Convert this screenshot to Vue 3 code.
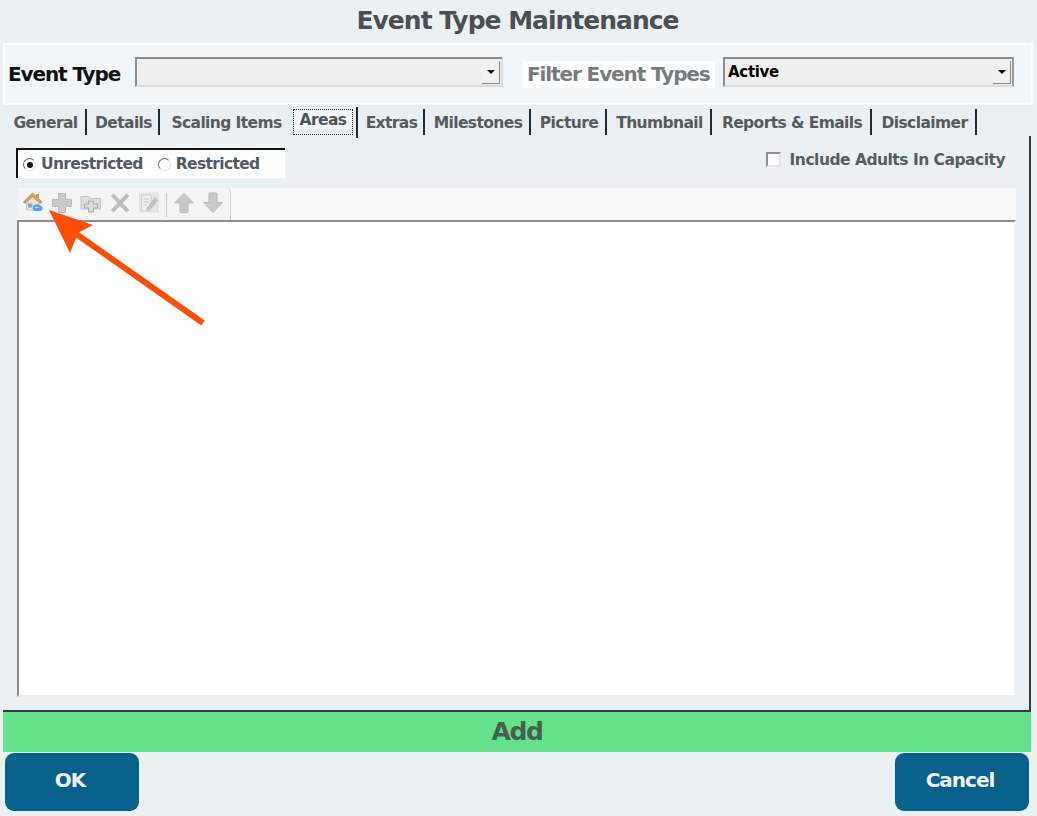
<script setup>
const tabs = [
  { label: 'General', width: 83 },
  { label: 'Details', width: 73 },
  { label: 'Scaling Items', width: 133, plain: true },
  { label: 'Areas', width: 65, active: true },
  { label: 'Extras', width: 67 },
  { label: 'Milestones', width: 106 },
  { label: 'Picture', width: 76 },
  { label: 'Thumbnail', width: 105 },
  { label: 'Reports & Emails', width: 160 },
  { label: 'Disclaimer', width: 105 }
]
</script>

<template>
  <div class="page">
    <h1 class="title">Event Type Maintenance</h1>
    <div class="top">
      <span class="et-label">Event Type</span>
      <div class="combo combo-a"><span class="combo-val"></span><span class="drop"><i></i></span></div>
      <span class="filter-label">Filter Event Types</span>
      <div class="combo combo-b"><span class="combo-val">Active</span><span class="drop"><i></i></span></div>
    </div>
    <div class="tabs">
      <div
        v-for="t in tabs"
        :key="t.label"
        class="tab"
        :class="{ active: t.active, plain: t.plain }"
        :style="{ width: t.width + 'px' }"
      ><span class="tab-text">{{ t.label }}</span></div>
    </div>
    <div class="panel">
      <div class="opts">
        <div class="radios">
          <span class="radio on"></span><span class="r-label">Unrestricted</span>
          <span class="radio second"></span><span class="r-label">Restricted</span>
        </div>
        <label class="check"><span class="box"></span>Include Adults In Capacity</label>
      </div>
      <div class="toolbar">
        <div class="tools">
          <svg class="ic" width="22" height="24" viewBox="0 0 22 24">
            <path d="M4.500 13 L10.500 7 L17 13 V20 H4.500 Z" fill="#e9e4da" stroke="#bdb29c" stroke-width=".6"/>
            <path d="M1.500 12 L10.500 3 L14.500 6.500 V4.500 H16.500 V8.500 L20 12 L18.500 13.500 L10.500 6.500 L3 13.500 Z" fill="#d4a066" stroke="#c5853f" stroke-width=".8"/>
            <rect x="6" y="13.500" width="4.500" height="4" fill="#98a2ac"/>
            <path d="M11 17 Q11.500 14 14.500 14.500 Q16.500 13.500 18 15.500 Q21 16 20.500 19 Q20 21.500 17 21 H13 Q10 20.500 11 17Z" fill="#4b9fe3"/>
            <path d="M13 17.500 H17" stroke="#b5dcf7" stroke-width="1.200"/>
          </svg>
          <svg class="ic" width="22" height="24" viewBox="0 0 22 24">
            <path d="M7.500 3.500 H14.500 V9.500 H20.500 V16.500 H14.500 V22.500 H7.500 V16.500 H1.500 V9.500 H7.500 Z" fill="#c9c9c9" stroke="#bababa"/>
          </svg>
          <svg class="ic" width="22" height="24" viewBox="0 0 22 24">
            <path d="M1 6.500 H8 L10 8.500 H20.500 V19 H1 Z" fill="#dedede" stroke="#c2c2c2"/>
            <path d="M8.500 11 H13.500 V14 H17.500 V18 H13.500 V22 H8.500 V18 H4.500 V14 H8.500 Z" fill="#dcdcdc" stroke="#a8a8a8"/>
          </svg>
          <svg class="ic" width="22" height="24" viewBox="0 0 22 24">
            <path d="M2 6 L4.500 3.500 L11 10 L17.500 3.500 L20.500 6 L13.500 13 L20.500 20 L17.500 22.500 L11 16 L4.500 22.500 L2 20 L8.500 13 Z" fill="#bdbdbd"/>
          </svg>
          <svg class="ic" width="22" height="24" viewBox="0 0 22 24">
            <rect x="1" y="2.500" width="20" height="20" fill="#e4e4e4"/>
            <path d="M3.500 5 H13 V21 H3.500 Z" fill="#f0f0f0" stroke="#cfcfcf"/>
            <path d="M5.500 9 H11 M5.500 12 H11 M5.500 15 H9" stroke="#c8c8c8"/>
            <path d="M8.500 18 L17 7 L20.500 10 L12 20 L8 21 Z" fill="#c3c3c3"/>
          </svg>
          <span class="vsep"></span>
          <svg class="ic" width="22" height="24" viewBox="0 0 22 24">
            <path d="M11 3.500 L20.500 13 H15 V22.500 H7 V13 H1.500 Z" fill="#c9c9c9" stroke="#bbb"/>
          </svg>
          <svg class="ic" width="22" height="24" viewBox="0 0 22 24">
            <path d="M11 22.500 L20.500 12.500 H15 V3 H7 V12.500 H1.500 Z" fill="#c9c9c9" stroke="#bbb"/>
          </svg>
        </div>
      </div>
      <div class="tree"></div>
    </div>
    <div class="add">Add</div>
    <div class="actions">
      <button class="btn">OK</button>
      <button class="btn">Cancel</button>
    </div>
    <svg class="arrow" width="220" height="150" viewBox="0 0 220 150">
      <path d="M203 323 L72 231" transform="translate(0 -200)" stroke="#fc4e08" stroke-width="6" fill="none"/>
      <path d="M49 210 L93 225 L78 233 L70 253 Z" transform="translate(0 -200)" fill="#fc4e08"/>
    </svg>
  </div>
</template>

<style>
html, body { margin: 0; background: #ebf0f3; }
</style>

<style scoped>
.page {
  position: relative;
  width: 1037px;
  height: 816px;
  overflow: hidden;
  background: #ebf0f3;
  font-family: "DejaVu Sans", sans-serif;
  font-weight: 700;
  color: #4d5257;
}
.title {
  margin: 0;
  height: 43px;
  padding-right: 2px;
  line-height: 42px;
  text-align: center;
  font-size: 25px;
  letter-spacing: -1px;
  font-weight: 700;
  color: #4b4f54;
}
.top {
  margin: 0 4px 0 3px;
  height: 62px;
  background: #f3f6f8;
  border: 2px solid #fbfcfd;
  display: flex;
  align-items: center;
  padding-left: 3px;
  box-sizing: border-box;
}
.et-label {
  width: 127px;
  font-size: 20px;
  letter-spacing: -1.1px;
  color: #111;
}
.combo {
  box-sizing: border-box;
  height: 30px;
  margin-top: -4px;
  background: #efefef;
  border: 2px solid #8c8c8c;
  border-right-color: #ddd;
  border-bottom-color: #ddd;
  display: flex;
  align-items: center;
  justify-content: space-between;
}
.combo-a { width: 368px; }
.combo-b { width: 291px; border-right-color: #999; margin-left: 8px; }
.combo-val {
  padding-left: 3px;
  font-size: 15px;
  letter-spacing: -0.3px;
  color: #000;
}
.drop {
  width: 18px;
  height: 23px;
  margin-right: 1px;
  background: #f1f1f1;
  border-right: 1px solid #888;
  border-bottom: 1px solid #888;
  box-sizing: border-box;
  display: flex;
  align-items: center;
  justify-content: center;
}
.drop i {
  display: block;
  width: 0;
  height: 0;
  border: 4px solid transparent;
  border-top: 4px solid #111;
  border-bottom: 0;
}
.filter-label {
  margin-left: 20px;
  padding: 0 0 0 4px;
  height: 27px;
  line-height: 27px;
  width: 192px;
  box-sizing: border-box;
  white-space: nowrap;
  background: #fff;
  font-size: 20px;
  letter-spacing: -1.1px;
  color: #777b7f;
}
.tabs {
  margin: 0 4px 0 3px;
  height: 31px;
  background: #e9eff2;
  display: flex;
  padding-left: 1px;
}
.tab {
  box-sizing: border-box;
  height: 26px;
  margin-top: 4px;
  padding: 2px 0 0 2px;
  border-right: 2px solid #1f2a33;
  display: flex;
  align-items: center;
  justify-content: center;
  font-size: 15.500px;
  letter-spacing: -0.6px;
  white-space: nowrap;
  color: #565a5e;
}
.tab.plain { border-right-color: transparent; }
.tab.active {
  height: 31px;
  margin-top: 2px;
  padding: 2px 3px 0 0;
  color: #4d5257;
  align-items: flex-start;
}
.tab.active .tab-text {
  box-sizing: border-box;
  width: 60px;
  height: 26px;
  border: 1px dotted #222;
  line-height: 20px;
  text-align: center;
  background: #f1f5f7;
}
.panel {
  box-sizing: border-box;
  margin: 0 6px 0 3px;
  height: 576px;
  background: #ebf0f3;
  border-right: 2px solid #2e3a45;
  border-bottom: 2px solid #2e3a45;
  padding: 12px 13px 0 13px;
}
.opts {
  display: flex;
  justify-content: space-between;
  height: 40px;
}
.radios {
  box-sizing: border-box;
  width: 269px;
  height: 30px;
  margin-left: 0;
  background: #fff;
  border-top: 2px solid #111;
  border-left: 2px solid #111;
  display: flex;
  align-items: center;
  padding-left: 5px;
  font-size: 15.500px;
  letter-spacing: -0.65px;
  color: #4d5a68;
}
.radio {
  box-sizing: border-box;
  width: 13px;
  height: 13px;
  margin-right: 5px;
  border-radius: 50%;
  border: 1px solid #666;
  border-right-color: #ddd;
  border-bottom-color: #ddd;
  background: #fff;
  position: relative;
}
.radio.second { margin-left: 15px; }
.radio.on::after {
  content: "";
  position: absolute;
  left: 3px;
  top: 3px;
  width: 6px;
  height: 6px;
  border-radius: 50%;
  background: #111;
}
.check {
  display: flex;
  align-items: center;
  height: 23px;
  margin-right: 11px;
  font-size: 15.500px;
  letter-spacing: -0.5px;
  color: #565c62;
}
.box {
  box-sizing: border-box;
  width: 15px;
  height: 15px;
  margin-right: 9px;
  background: #fff;
  border: 2px solid #8e8e8e;
  border-right-color: #e4e4e4;
  border-bottom-color: #e4e4e4;
}
.toolbar {
  box-sizing: border-box;
  margin-left: 2px;
  width: 998px;
  height: 32px;
  background: #f9f9f9;
}
.tools {
  box-sizing: border-box;
  width: 213px;
  height: 32px;
  padding: 2px 0 0 4px;
  background: #f4f4f4;
  border-right: 1px solid #cfcfcf;
  border-radius: 4px 4px 0 0;
  display: flex;
  align-items: flex-start;
  gap: 7px;
}
.ic { flex: none; }
.vsep {
  width: 1px;
  height: 24px;
  margin: 3px -1px 0;
  background: #c8c8c8;
}
.tree {
  box-sizing: border-box;
  width: 999px;
  margin-left: 1px;
  height: 477px;
  background: #fff;
  border-top: 2px solid #8d8d8d;
  border-left: 2px solid #8d8d8d;
  border-right: 2px solid #eee;
  border-bottom: 2px solid #eee;
}
.add {
  margin: 0 6px 0 3px;
  height: 40px;
  line-height: 40px;
  text-align: center;
  background: #65e08b;
  font-size: 25px;
  letter-spacing: -1.4px;
  color: #44604f;
}
.actions {
  display: flex;
  justify-content: space-between;
  padding: 1px 8px 0 5px;
}
.btn {
  box-sizing: border-box;
  width: 134px;
  height: 58px;
  border: 0;
  border-radius: 9px;
  background: #08618a;
  color: #f2f2f2;
  font-family: "DejaVu Sans", sans-serif;
  font-weight: 700;
  font-size: 20px;
  letter-spacing: -1px;
  padding: 0 4px 5px 0;
}
.arrow {
  position: absolute;
  left: 0;
  top: 200px;
}
</style>
